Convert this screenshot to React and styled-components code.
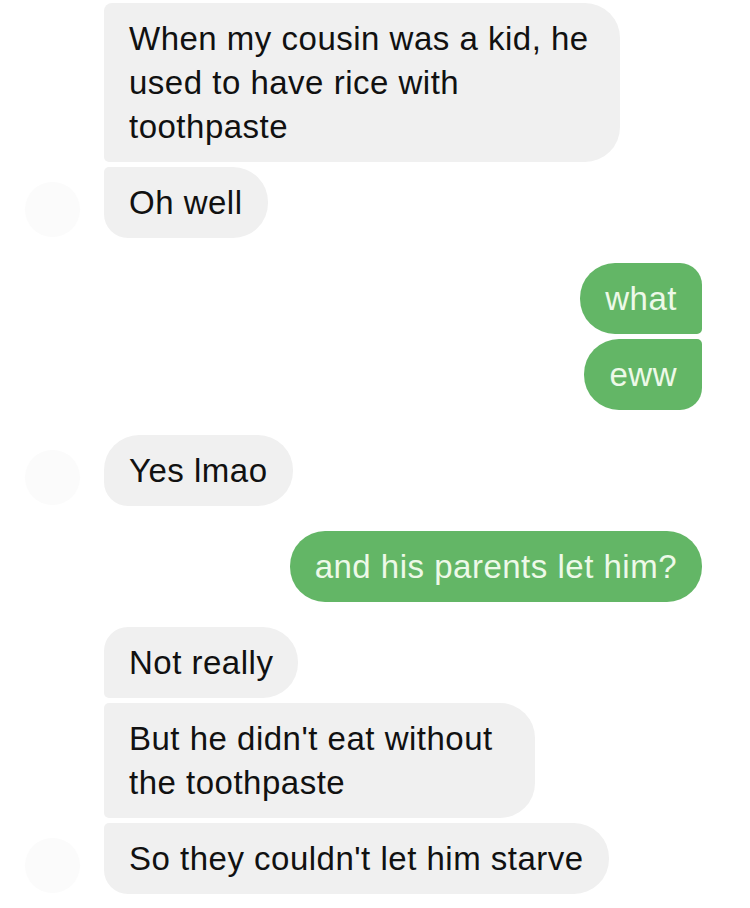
import React from "react";
import styled, { createGlobalStyle, css } from "styled-components";

const Global = createGlobalStyle`
  html, body { margin: 0; padding: 0; background: #ffffff; }
  body { font-family: "Liberation Sans", Arial, sans-serif; -webkit-font-smoothing: antialiased; }
`;

const Thread = styled.div`
  display: flex;
  flex-direction: column;
  gap: 25px;
  padding: 3px 48px 0 25px;
  width: 750px;
  height: 908px;
  box-sizing: border-box;
  overflow: hidden;
`;

const Group = styled.div`
  display: flex;
  align-items: flex-end;
  justify-content: ${(p) => (p.$out ? "flex-end" : "flex-start")};
  gap: 24px;
`;

const Avatar = styled.div`
  flex: none;
  width: 55px;
  height: 55px;
  border-radius: 50%;
  background: #fbfbfb;
  margin-bottom: 1px;
`;

const Stack = styled.div`
  display: flex;
  flex-direction: column;
  align-items: ${(p) => (p.$out ? "flex-end" : "flex-start")};
  gap: 5px;
`;

const big = 35;
const edge = 24;
const small = 5;

const Bubble = styled.div`
  box-sizing: border-box;
  padding: 13.5px 25px;
  font-size: 33px;
  line-height: 44px;
  letter-spacing: 0.5px;
  white-space: nowrap;
  ${(p) =>
    p.$out
      ? css`
          background: #63b666;
          color: #edf9e8;
          border-radius: ${big}px ${p.$top} ${p.$bottom} ${big}px;
        `
      : css`
          background: #f0f0f0;
          color: #111111;
          border-radius: ${p.$top} ${big}px ${big}px ${p.$bottom};
        `}
`;

const corner = (adjacent, outer) => (adjacent ? `${small}px` : `${outer}px`);

function Msg({ out, prevJoined, nextJoined, topOuter = big, bottomOuter = big, width, children }) {
  return (
    <Bubble
      $out={out}
      $top={corner(prevJoined, topOuter)}
      $bottom={corner(nextJoined, bottomOuter)}
      style={width ? { width } : undefined}
    >
      {children}
    </Bubble>
  );
}

function Incoming({ messages }) {
  return (
    <Group>
      <Avatar />
      <Stack>
        {messages.map((m, i) => (
          <Msg
            key={i}
            prevJoined={i > 0}
            nextJoined={i < messages.length - 1}
            topOuter={m.topOuter ?? edge}
            bottomOuter={edge}
            width={m.width}
          >
            {m.lines.map((l, j) => (
              <React.Fragment key={j}>
                {j > 0 && <br />}
                {l}
              </React.Fragment>
            ))}
          </Msg>
        ))}
      </Stack>
    </Group>
  );
}

function Outgoing({ messages }) {
  return (
    <Group $out>
      <Stack $out>
        {messages.map((m, i) => (
          <Msg
            key={i}
            out
            prevJoined={i > 0}
            nextJoined={i < messages.length - 1}
            topOuter={messages.length > 1 ? 22 : big}
            bottomOuter={messages.length > 1 ? 22 : big}
          >
            {m}
          </Msg>
        ))}
      </Stack>
    </Group>
  );
}

export default function App() {
  return (
    <>
      <Global />
      <Thread>
        <Incoming
          messages={[
            {
              lines: ["When my cousin was a kid, he", "used to have rice with", "toothpaste"],
              topOuter: 8,
              width: 516,
            },
            { lines: ["Oh well"] },
          ]}
        />
        <Outgoing messages={["what", "eww"]} />
        <Incoming messages={[{ lines: ["Yes lmao"], topOuter: big }]} />
        <Outgoing messages={["and his parents let him?"]} />
        <Incoming
          messages={[
            { lines: ["Not really"], topOuter: edge },
            { lines: ["But he didn't eat without", "the toothpaste"], width: 431 },
            { lines: ["So they couldn't let him starve"] },
          ]}
        />
      </Thread>
    </>
  );
}
